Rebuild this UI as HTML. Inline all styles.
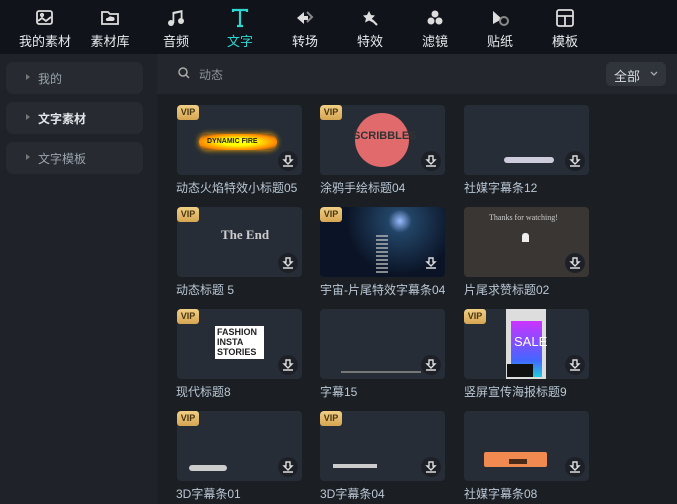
<!DOCTYPE html>
<html><head><meta charset="utf-8"><style>
*{margin:0;padding:0;box-sizing:border-box}
body{width:677px;height:504px;overflow:hidden;background:#1b1e22;font-family:"Liberation Sans","Noto Sans CJK SC",sans-serif;position:relative;color:#c9ccd1}
.nav{position:absolute;left:0;top:0;width:677px;height:54px;background:#10141a}
.ni{position:absolute;top:0;width:60px;text-align:center;font-size:13px;color:#e8eaed}
.ni svg{position:absolute;left:20px;top:8px}
.ni span{position:absolute;left:0;width:60px;top:31px}
.side{position:absolute;left:0;top:54px;width:157px;height:450px;background:#1f2228}
.si{position:absolute;left:6px;width:137px;height:32px;background:#272a31;border-radius:7px;font-size:12px;color:#9aa3ad}
.si i{position:absolute;left:20px;top:12px;border-left:4px solid #777;border-top:3px solid transparent;border-bottom:3px solid transparent}
.si span{position:absolute;left:32px;top:8px}
.search{position:absolute;left:157px;top:54px;width:520px;height:40px;background:#23262c}
.all{position:absolute;left:606px;top:62px;width:60px;height:24px;background:#30343b;border-radius:5px;font-size:13px;color:#d8dbe0}
.card{position:absolute;width:125px;height:70px;background:#262d36;border-radius:4px;overflow:hidden}
.vip{position:absolute;left:0;top:0;width:22px;height:15px;background:linear-gradient(#f0cf85,#d6a652);border-radius:3px;font:bold 9px "Liberation Sans",sans-serif;color:#4a3510;text-align:center;line-height:15px}
.dl{position:absolute;right:4px;bottom:4px;width:20px;height:20px;border-radius:50%;background:#1d2127}
.dl svg{position:absolute;left:3px;top:3px}
.lbl{position:absolute;font-size:12px;color:#b9c7d5;white-space:nowrap}
</style></head><body>
<div class="nav">
<div class="ni" style="left:15px"><svg width="20" height="20" viewBox="0 0 20 20" fill="none" stroke="#ddd" stroke-width="1.8"><rect x="2" y="3" width="15" height="13" rx="2"/><path d="M3 13l4-3 4 3 5-4"/><circle cx="7" cy="7" r="1.2"/></svg><span>我的素材</span></div>
<div class="ni" style="left:80px"><svg width="20" height="20" viewBox="0 0 20 20" fill="none" stroke="#ddd" stroke-width="1.8"><path d="M2 4h6l2 2h8v10H2z"/><path d="M7 13h6a2 2 0 0 0-1-4 2.5 2.5 0 0 0-4 1 1.5 1.5 0 0 0-1 3z" fill="#ddd" stroke="none"/></svg><span>素材库</span></div>
<div class="ni" style="left:146px"><svg width="20" height="20" viewBox="0 0 20 20" fill="#ddd"><circle cx="5" cy="15" r="3"/><circle cx="15" cy="13" r="3"/><path d="M6.5 15V4l10-2v11h-1.8V4.5L8.3 6v9z"/></svg><span>音频</span></div>
<div class="ni" style="left:210px;color:#2fd6d0"><svg width="20" height="20" viewBox="0 0 20 20" fill="none" stroke="#2fd6d0" stroke-width="2.2"><path d="M3 4V2h14v2M10 2v16M7 18h6"/></svg><span>文字</span></div>
<div class="ni" style="left:275px"><svg width="20" height="20" viewBox="0 0 20 20"><path d="M9 4L2 10l7 6v-4h4V8H9z" fill="#ddd"/><path d="M12 4l5 5-5 5" fill="none" stroke="#888" stroke-width="2"/></svg><span>转场</span></div>
<div class="ni" style="left:340px"><svg width="20" height="20" viewBox="0 0 20 20"><path d="M9 3l2 4 4 .5-3 3 1 4-4-2-4 2 1-4-3-3 4-.5z" fill="#ddd"/><path d="M12 12l5 5" stroke="#ddd" stroke-width="2"/></svg><span>特效</span></div>
<div class="ni" style="left:405px"><svg width="20" height="20" viewBox="0 0 20 20" fill="#ddd"><circle cx="10" cy="6" r="3.5"/><circle cx="6" cy="13" r="3.5"/><circle cx="14" cy="13" r="3.5"/></svg><span>滤镜</span></div>
<div class="ni" style="left:470px"><svg width="20" height="20" viewBox="0 0 20 20"><path d="M3 3l9 8-9 5z" fill="#ddd"/><circle cx="14" cy="13" r="4" fill="none" stroke="#888" stroke-width="2"/></svg><span>贴纸</span></div>
<div class="ni" style="left:535px"><svg width="20" height="20" viewBox="0 0 20 20" fill="none" stroke="#ddd" stroke-width="1.8"><rect x="2" y="2" width="16" height="16" rx="2"/><path d="M2 8h16M10 8v10"/></svg><span>模板</span></div>
</div>
<div class="side">
<div class="si" style="top:8px"><i></i><span>我的</span></div>
<div class="si" style="top:48px;color:#e2e5e9"><i></i><span><b>文字素材</b></span></div>
<div class="si" style="top:88px"><i></i><span>文字模板</span></div>
</div>
<div class="search"><svg style="position:absolute;left:21px;top:13px" width="12" height="12" viewBox="0 0 12 12" fill="none" stroke="#aaa" stroke-width="1.5"><circle cx="5" cy="5" r="4"/><path d="M8 8l3 3"/></svg><span style="position:absolute;left:42px;top:12px;font-size:12px;color:#8c939c">动态</span></div>
<div class="all"><span style="position:absolute;left:8px;top:4px">全部</span><svg style="position:absolute;left:44px;top:9px" width="8" height="6" viewBox="0 0 8 6" fill="none" stroke="#aaa" stroke-width="1.3"><path d="M1 1l3 3 3-3"/></svg></div>

<!-- row 1 -->
<div class="card" style="left:177px;top:105px"><div style="position:absolute;left:22px;top:29px;width:78px;height:16px;border-radius:8px;background:radial-gradient(#ff0 30%,#f80 70%,transparent);box-shadow:0 0 6px #fa0"></div><div style="position:absolute;left:30px;top:33px;font:bold 7px sans-serif;color:#222">DYNAMIC FIRE</div><div class="vip">VIP</div><div class="dl"><svg width="14" height="14" viewBox="0 0 14 14" fill="none" stroke="#ddd" stroke-width="1.4"><path d="M5 2h4v4h2l-4 4-4-4h2z M2 12h10"/></svg></div></div>
<div class="card" style="left:320px;top:105px"><div style="position:absolute;left:35px;top:8px;width:54px;height:54px;border-radius:50%;background:#e06a6c"></div><div style="position:absolute;left:33px;top:25px;font:bold 11px sans-serif;color:#333">SCRIBBLES</div><div class="vip">VIP</div><div class="dl"><svg width="14" height="14" viewBox="0 0 14 14" fill="none" stroke="#ddd" stroke-width="1.4"><path d="M5 2h4v4h2l-4 4-4-4h2z M2 12h10"/></svg></div></div>
<div class="card" style="left:464px;top:105px"><div style="position:absolute;left:40px;top:52px;width:50px;height:6px;background:#ccd;border-radius:3px"></div><div class="dl"><svg width="14" height="14" viewBox="0 0 14 14" fill="none" stroke="#ddd" stroke-width="1.4"><path d="M5 2h4v4h2l-4 4-4-4h2z M2 12h10"/></svg></div></div>
<div class="lbl" style="left:176px;top:179px">动态火焰特效小标题05</div>
<div class="lbl" style="left:320px;top:179px">涂鸦手绘标题04</div>
<div class="lbl" style="left:464px;top:179px">社媒字幕条12</div>
<!-- row 2 -->
<div class="card" style="left:177px;top:207px"><div style="position:absolute;left:44px;top:20px;font:bold 13px 'Liberation Serif',serif;color:#ccc">The End</div><div class="vip">VIP</div><div class="dl"><svg width="14" height="14" viewBox="0 0 14 14" fill="none" stroke="#ddd" stroke-width="1.4"><path d="M5 2h4v4h2l-4 4-4-4h2z M2 12h10"/></svg></div></div>
<div class="card" style="left:320px;top:207px;background:radial-gradient(circle at 80px 14px,#9bf 0,#246 12%,#0b1426 55%)"><div style="position:absolute;left:56px;top:28px;width:12px;height:38px;background:repeating-linear-gradient(#bbb 0 2px,transparent 2px 4px);opacity:.7"></div><div class="vip">VIP</div><div class="dl" style="background:none"><svg width="14" height="14" viewBox="0 0 14 14" fill="none" stroke="#ddd" stroke-width="1.4"><path d="M5 2h4v4h2l-4 4-4-4h2z M2 12h10"/></svg></div></div>
<div class="card" style="left:464px;top:207px;background:#3a3633"><div style="position:absolute;left:25px;top:6px;font:8px 'Liberation Serif',serif;color:#ccc">Thanks for watching!</div><div style="position:absolute;left:58px;top:26px;width:7px;height:9px;background:#eee;border-radius:3px 3px 0 0"></div><div class="dl"><svg width="14" height="14" viewBox="0 0 14 14" fill="none" stroke="#ddd" stroke-width="1.4"><path d="M5 2h4v4h2l-4 4-4-4h2z M2 12h10"/></svg></div></div>
<div class="lbl" style="left:176px;top:281px">动态标题 5</div>
<div class="lbl" style="left:320px;top:281px">宇宙-片尾特效字幕条04</div>
<div class="lbl" style="left:464px;top:281px">片尾求赞标题02</div>
<!-- row 3 -->
<div class="card" style="left:177px;top:309px"><div style="position:absolute;left:38px;top:17px;width:49px;height:33px;background:#fff;font:bold 9px sans-serif;color:#222;line-height:10px;padding:1px 2px">FASHION<br>INSTA<br>STORIES</div><div class="vip">VIP</div><div class="dl"><svg width="14" height="14" viewBox="0 0 14 14" fill="none" stroke="#ddd" stroke-width="1.4"><path d="M5 2h4v4h2l-4 4-4-4h2z M2 12h10"/></svg></div></div>
<div class="card" style="left:320px;top:309px"><div style="position:absolute;left:21px;top:62px;width:80px;height:2px;background:#777"></div><div class="dl"><svg width="14" height="14" viewBox="0 0 14 14" fill="none" stroke="#ddd" stroke-width="1.4"><path d="M5 2h4v4h2l-4 4-4-4h2z M2 12h10"/></svg></div></div>
<div class="card" style="left:464px;top:309px"><div style="position:absolute;left:42px;top:0;width:40px;height:70px;background:#ddd"></div><div style="position:absolute;left:47px;top:12px;width:31px;height:56px;background:linear-gradient(#c3f,#46f 70%,#2cd)"></div><div style="position:absolute;left:50px;top:25px;font:13px sans-serif;color:#fff">SALE</div><div style="position:absolute;left:43px;top:55px;width:26px;height:13px;background:#111"></div><div class="vip">VIP</div><div class="dl"><svg width="14" height="14" viewBox="0 0 14 14" fill="none" stroke="#ddd" stroke-width="1.4"><path d="M5 2h4v4h2l-4 4-4-4h2z M2 12h10"/></svg></div></div>
<div class="lbl" style="left:176px;top:383px">现代标题8</div>
<div class="lbl" style="left:320px;top:383px">字幕15</div>
<div class="lbl" style="left:464px;top:383px">竖屏宣传海报标题9</div>
<!-- row 4 -->
<div class="card" style="left:177px;top:411px"><div style="position:absolute;left:12px;top:54px;width:38px;height:6px;background:#ccc;border-radius:3px"></div><div class="vip">VIP</div><div class="dl"><svg width="14" height="14" viewBox="0 0 14 14" fill="none" stroke="#ddd" stroke-width="1.4"><path d="M5 2h4v4h2l-4 4-4-4h2z M2 12h10"/></svg></div></div>
<div class="card" style="left:320px;top:411px"><div style="position:absolute;left:13px;top:53px;width:44px;height:4px;background:#ccc"></div><div class="vip">VIP</div><div class="dl"><svg width="14" height="14" viewBox="0 0 14 14" fill="none" stroke="#ddd" stroke-width="1.4"><path d="M5 2h4v4h2l-4 4-4-4h2z M2 12h10"/></svg></div></div>
<div class="card" style="left:464px;top:411px"><div style="position:absolute;left:20px;top:41px;width:63px;height:15px;background:#f08a50;border-radius:2px"></div><div style="position:absolute;left:45px;top:48px;width:18px;height:5px;background:#4a2a1a"></div><div class="dl"><svg width="14" height="14" viewBox="0 0 14 14" fill="none" stroke="#ddd" stroke-width="1.4"><path d="M5 2h4v4h2l-4 4-4-4h2z M2 12h10"/></svg></div></div>
<div class="lbl" style="left:176px;top:485px">3D字幕条01</div>
<div class="lbl" style="left:320px;top:485px">3D字幕条04</div>
<div class="lbl" style="left:464px;top:485px">社媒字幕条08</div>
</body></html>
